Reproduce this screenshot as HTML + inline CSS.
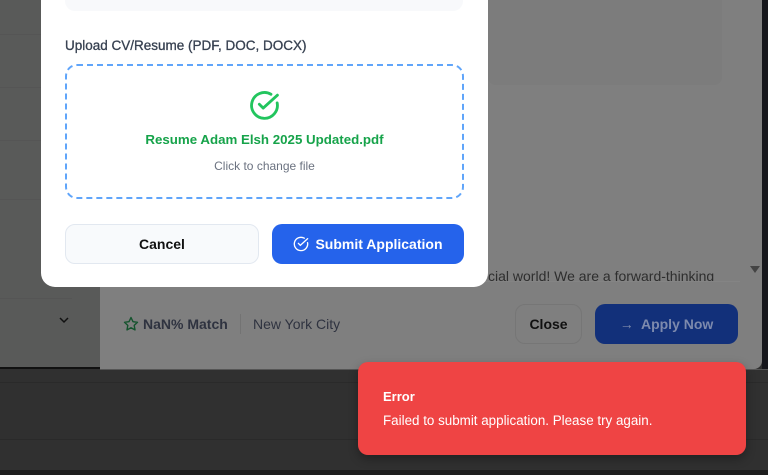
<!DOCTYPE html>
<html><head><style>
*{margin:0;padding:0;box-sizing:border-box}
body{width:768px;height:475px;overflow:hidden;background:#303030;font-family:"Liberation Sans",sans-serif;position:relative}
.a{position:absolute}
</style></head><body>
<div class="a" style="left:0;top:0;width:100px;height:369px;background:#595a59"></div>
<div class="a" style="left:0;top:34px;width:100px;height:1px;background:#555"></div>
<div class="a" style="left:0;top:87px;width:100px;height:1px;background:#555"></div>
<div class="a" style="left:0;top:140px;width:100px;height:1px;background:#555"></div>
<div class="a" style="left:0;top:199px;width:100px;height:1px;background:#555"></div>
<div class="a" style="left:0;top:298px;width:72px;height:1px;background:#555"></div>
<div class="a" style="left:0;top:367px;width:100px;height:2px;background:#111"></div>
<svg class="a" style="left:58px;top:316px" width="12" height="8"><path d="M2 2l4 4 4-4" stroke="#111" stroke-width="1.5" fill="none"/></svg>
<div class="a" style="left:100px;top:0;width:662px;height:369px;background:#7f7f7f;border-bottom-right-radius:8px"></div>
<div class="a" style="left:488px;top:0;width:234px;height:85px;background:#7c7c7c;border-radius:0 0 8px 8px"></div>
<div class="a" style="left:762px;top:0;width:6px;height:369px;background:#16171c"></div>
<div class="a" style="left:100px;top:369px;width:668px;height:1px;background:#555"></div>
<div class="a" style="left:0;top:382px;width:768px;height:1px;background:#2a2a2a"></div>
<div class="a" style="left:0;top:439px;width:768px;height:1px;background:#2a2a2a"></div>
<div class="a" style="left:0;top:470px;width:768px;height:5px;background:#1e1e1e"></div>
<div class="a" style="left:488px;top:266px;width:230px;height:15px;overflow:hidden;font-size:14px;color:#2e2e2e;line-height:20px">cial world! We are a forward-thinking</div>
<div class="a" style="left:100px;top:281px;width:640px;height:1px;background:#848484"></div>
<svg class="a" style="left:750px;top:266px" width="10" height="8"><path d="M0 0h10L5 7z" fill="#444"/></svg>
<svg class="a" style="left:123px;top:316px" width="16" height="16"><path d="M8 1.5l2 4.2 4.5.6-3.3 3.1.8 4.5L8 11.7l-4 2.2.8-4.5L1.5 6.3 6 5.7z" stroke="#14532d" stroke-width="1.4" fill="none" stroke-linejoin="round"/></svg>
<div class="a" style="left:143px;top:316px;font-size:14px;color:#2f3340;font-weight:bold;line-height:17px">NaN% Match</div>
<div class="a" style="left:240px;top:314px;width:1px;height:20px;background:#737373"></div>
<div class="a" style="left:253px;top:316px;font-size:14px;color:#2f3340;line-height:17px">New York City</div>
<div class="a" style="left:515px;top:304px;width:67px;height:40px;border:1px solid #767676;border-radius:10px;font-size:14px;font-weight:bold;color:#111;text-align:center;line-height:38px">Close</div>
<div class="a" style="left:595px;top:304px;width:143px;height:40px;background:#12307a;border-radius:10px;font-size:14px;font-weight:bold;color:#7d8aad;text-align:center;line-height:40px">&#8594;&nbsp; Apply Now</div>
<div class="a" style="left:41px;top:-20px;width:447px;height:307px;background:#fff;border-radius:14px"></div>
<div class="a" style="left:65px;top:-10px;width:398px;height:21px;background:#f8f9fb;border-radius:10px"></div>
<div class="a" style="left:65px;top:38px;font-size:13.5px;color:#374151;line-height:16px;-webkit-text-stroke:0.3px #374151">Upload CV/Resume (PDF, DOC, DOCX)</div>
<div class="a" style="left:65px;top:64px;width:399px;height:135px;border:2px dashed #60a5fa;border-radius:12px"></div>
<svg class="a" style="left:249px;top:90px" width="31" height="31" viewBox="0 0 24 24"><path d="M21.8 10A10 10 0 1 1 17 3.3" stroke="#22c55e" stroke-width="2.2" fill="none" stroke-linecap="round"/><path d="M8 11l3 3L22 4" stroke="#22c55e" stroke-width="2.2" fill="none" stroke-linecap="round" stroke-linejoin="round"/></svg>
<div class="a" style="left:65px;top:132px;width:399px;text-align:center;font-size:13.3px;font-weight:bold;color:#16a34a;line-height:16px">Resume Adam Elsh 2025 Updated.pdf</div>
<div class="a" style="left:65px;top:159px;width:399px;text-align:center;font-size:12px;color:#6b7280;line-height:15px">Click to change file</div>
<div class="a" style="left:65px;top:224px;width:194px;height:40px;background:#f8fafc;border:1px solid #e2e8f0;border-radius:10px;text-align:center;font-size:14px;font-weight:bold;color:#111;line-height:38px">Cancel</div>
<div class="a" style="left:272px;top:224px;width:192px;height:40px;background:#2563eb;border-radius:10px;text-align:center;font-size:14px;font-weight:bold;color:#fff;line-height:40px"><svg width="16" height="16" viewBox="0 0 24 24" style="vertical-align:-3px;margin-right:6px"><path d="M21.8 10A10 10 0 1 1 17 3.3" stroke="#fff" stroke-width="2" fill="none" stroke-linecap="round"/><path d="M8 11l3 3L22 4" stroke="#fff" stroke-width="2" fill="none" stroke-linecap="round"/></svg>Submit Application</div>
<div class="a" style="left:358px;top:362px;width:388px;height:93px;background:#ef4444;border-radius:10px;box-shadow:0 4px 10px rgba(0,0,0,.3)"></div>
<div class="a" style="left:383px;top:389px;font-size:13px;font-weight:bold;color:#fff;line-height:16px">Error</div>
<div class="a" style="left:383px;top:413px;font-size:13.4px;color:#fff;line-height:16px">Failed to submit application. Please try again.</div>
</body></html>
